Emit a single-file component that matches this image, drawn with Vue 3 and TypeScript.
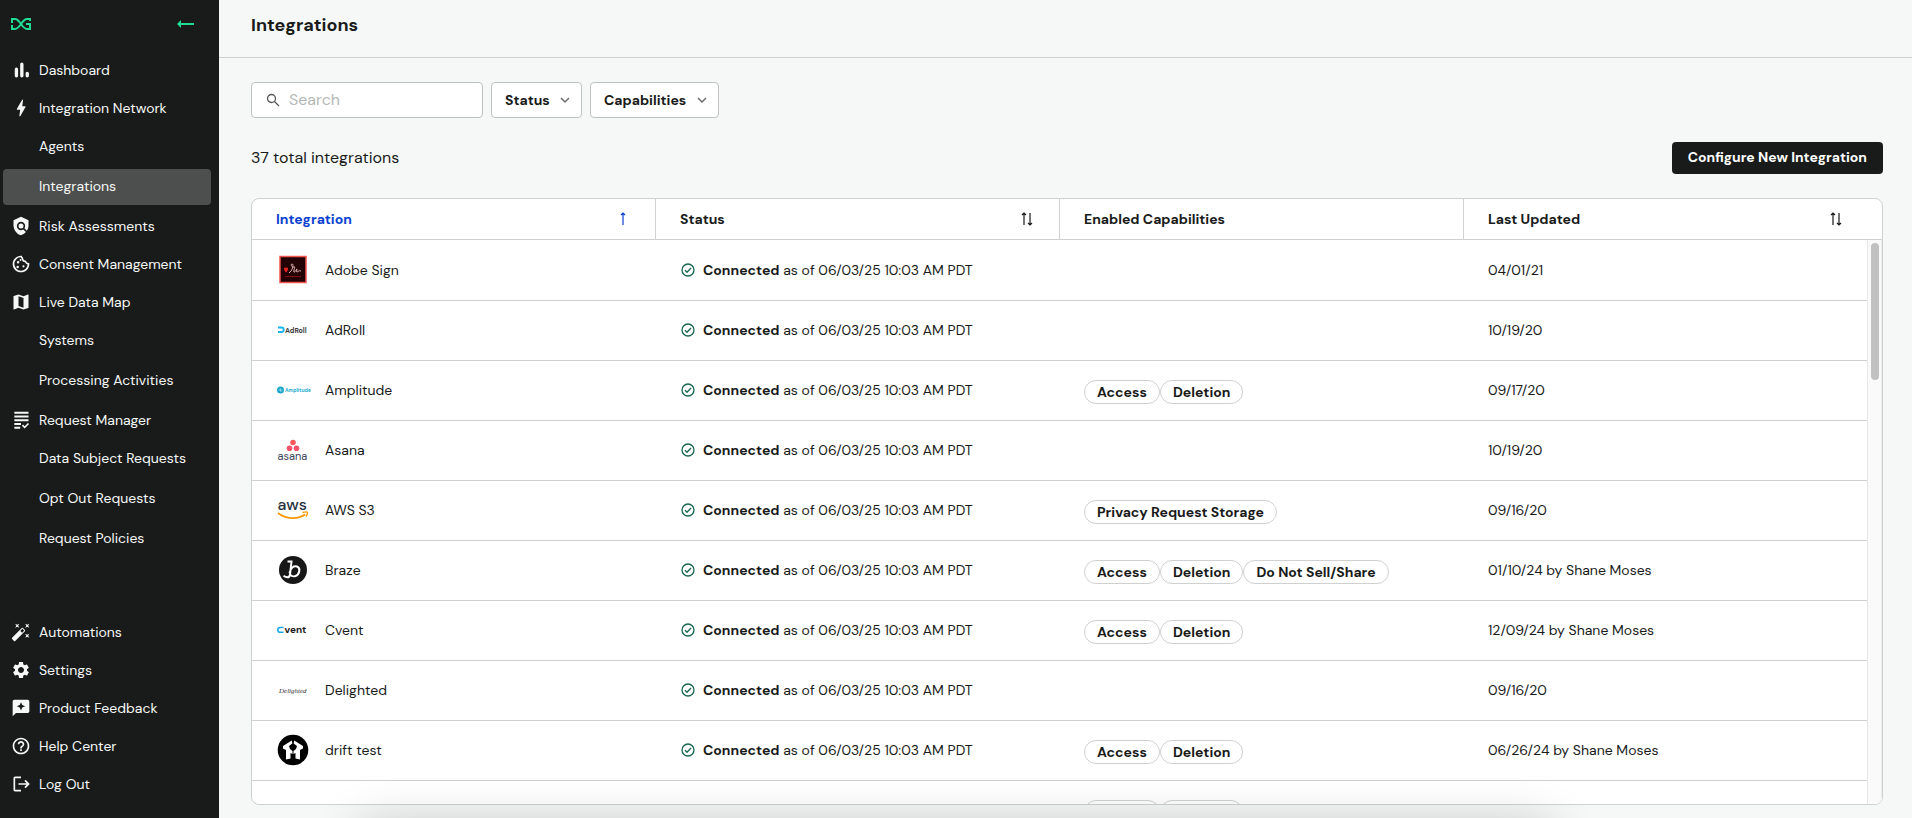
<script setup lang="ts">
import { ref } from 'vue'

interface NavChild { label: string; active?: boolean }
interface NavItem { label: string; icon: string; children?: NavChild[] }
interface Row { name: string; logo: string; caps: string[]; updated: string }

const icons: Record<string, string> = {
  chart: 'M6.500 9a2 2 0 0 1 2 2v8a2 2 0 0 1-4 0v-8a2 2 0 0 1 2-2zM13 3a2 2 0 0 1 2 2v14a2 2 0 0 1-4 0V5a2 2 0 0 1 2-2zM19.500 14a2 2 0 0 1 2 2v3a2 2 0 0 1-4 0v-3a2 2 0 0 1 2-2z',
  bolt: 'M11 22h-1l1-8H7.500c-.88 0-.5-.75-.31-1.100C8.480 10.500 11 6 13.500 2h1l-1 8h3.510c.5 0 .62.300.4.660C12.970 18.500 11 22 11 22z',
  shield: 'M21 5l-9-4-9 4v6c0 5.550 3.840 10.740 9 12 2.300-.56 4.330-1.900 5.880-3.710l-3.120-3.120c-1.940 1.290-4.580 1.070-6.290-.64-1.950-1.950-1.950-5.120 0-7.070 1.950-1.950 5.120-1.950 7.070 0 1.710 1.710 1.920 4.350.64 6.290l2.900 2.900C20.290 15.690 21 13.380 21 11V5zM12 9a3 3 0 1 0 0 6 3 3 0 0 0 0-6z',
  cookie: 'M12 2C6.500 2 2 6.500 2 12s4.500 10 10 10 10-4.500 10-10c0-.4 0-.8-.1-1.200-1.900.3-3.500-.9-3.700-2.700-2.200.2-4-1.500-3.700-3.800-1-.3-1.400-1.200-1.300-2.200C12.800 2 12.400 2 12 2zm-.5 2c.3.700.8 1.300 1.400 1.700.1 2.200 1.700 4 4 4.300.6 1.300 1.700 2.300 3.100 2.700A8 8 0 1 1 11.500 4zM8.500 8.500a1.500 1.500 0 1 0 0 3 1.500 1.500 0 0 0 0-3zM8 14a1.500 1.500 0 1 0 0 3 1.500 1.500 0 0 0 0-3zM15 13.500a1.300 1.300 0 1 0 0 2.600 1.300 1.300 0 0 0 0-2.600zM11.500 6a1.200 1.200 0 1 0 0 2.400 1.200 1.200 0 0 0 0-2.400z',
  map: 'M20.500 3l-.16.03L15 5.100 9 3 3.360 4.900c-.21.07-.36.25-.36.48V20.500c0 .28.22.5.5.5l.16-.03L9 18.900l6 2.100 5.640-1.900c.21-.07.36-.25.36-.48V3.500c0-.28-.22-.5-.5-.5zM15 19l-6-2.110V5l6 2.110V19z',
  list: 'M4 2h17v2.400H4zM4 6.500h17v2.400H4zM4 11h17v2.400H4zM4 15.500h8v2.400H4zM4 20h7v2.400H4zM16.400 22.200l-3.400-3.400 1.400-1.400 2 2 3.900-3.900 1.400 1.400z',
  wand: 'M7.500 5.600L10 7 8.600 4.500 10 2 7.500 3.400 5 2l1.400 2.500L5 7zm12 9.800L17 14l1.400 2.500L17 19l2.500-1.400L22 19l-1.400-2.500L22 14zM22 2l-2.500 1.400L17 2l1.400 2.500L17 7l2.500-1.400L22 7l-1.400-2.500zm-7.630 5.290c-.39-.39-1.020-.39-1.410 0L1.290 18.960c-.39.39-.39 1.020 0 1.410l2.340 2.340c.39.39 1.020.39 1.410 0L16.700 11.050c.39-.39.39-1.020 0-1.410l-2.330-2.350zm-1.030 5.490l-2.120-2.120 2.440-2.440 2.120 2.120-2.440 2.440z',
  gear: 'M19.140 12.940c.04-.3.06-.61.06-.94 0-.32-.02-.64-.07-.94l2.030-1.580c.18-.14.23-.41.12-.61l-1.920-3.320c-.12-.22-.37-.29-.59-.22l-2.390.96c-.5-.38-1.030-.7-1.620-.94l-.36-2.540c-.04-.24-.24-.41-.48-.41h-3.840c-.24 0-.43.17-.47.41l-.36 2.540c-.59.24-1.130.57-1.620.94l-2.390-.96c-.22-.08-.47 0-.59.22L2.740 8.870c-.12.21-.08.47.12.61l2.030 1.580c-.05.3-.09.63-.09.94s.02.64.07.94l-2.030 1.580c-.18.14-.23.41-.12.61l1.920 3.320c.12.22.37.29.59.22l2.390-.96c.5.38 1.030.7 1.620.94l.36 2.540c.05.24.24.41.48.41h3.840c.24 0 .44-.17.47-.41l.36-2.540c.59-.24 1.130-.56 1.620-.94l2.390.96c.22.08.47 0 .59-.22l1.920-3.320c.12-.22.07-.47-.12-.61l-2.010-1.580zM12 15.600c-1.980 0-3.600-1.620-3.600-3.600s1.620-3.600 3.600-3.600 3.600 1.620 3.600 3.600-1.620 3.600-3.600 3.600z',
  feedback: 'M20 2H4c-1.100 0-2 .9-2 2v18l4-4h14c1.100 0 2-.9 2-2V4c0-1.100-.9-2-2-2zm-6.500 9.500L12 15l-1.500-3.500L7 10l3.500-1.500L12 5l1.500 3.500L17 10z',
  help: 'M11 18h2v-2h-2v2zm1-16C6.480 2 2 6.480 2 12s4.480 10 10 10 10-4.480 10-10S17.520 2 12 2zm0 18c-4.410 0-8-3.590-8-8s3.590-8 8-8 8 3.590 8 8-3.590 8-8 8zm0-14c-2.210 0-4 1.790-4 4h2c0-1.100.9-2 2-2s2 .9 2 2c0 2-3 1.750-3 5h2c0-2.250 3-2.500 3-5 0-2.210-1.790-4-4-4z',
  logout: 'M17.500 7l-1.410 1.410L18.670 11H9v2h9.670l-2.580 2.580L17.500 17l5-5zM5 5h7V3H5c-1.100 0-2 .9-2 2v14c0 1.100.9 2 2 2h7v-2H5V5z',
}

const primaryNav: NavItem[] = [
  { label: 'Dashboard', icon: 'chart' },
  {
    label: 'Integration Network',
    icon: 'bolt',
    children: [{ label: 'Agents' }, { label: 'Integrations', active: true }],
  },
  { label: 'Risk Assessments', icon: 'shield' },
  { label: 'Consent Management', icon: 'cookie' },
  {
    label: 'Live Data Map',
    icon: 'map',
    children: [{ label: 'Systems' }, { label: 'Processing Activities' }],
  },
  {
    label: 'Request Manager',
    icon: 'list',
    children: [
      { label: 'Data Subject Requests' },
      { label: 'Opt Out Requests' },
      { label: 'Request Policies' },
    ],
  },
]

const secondaryNav: NavItem[] = [
  { label: 'Automations', icon: 'wand' },
  { label: 'Settings', icon: 'gear' },
  { label: 'Product Feedback', icon: 'feedback' },
  { label: 'Help Center', icon: 'help' },
  { label: 'Log Out', icon: 'logout' },
]

const checkedAt = '06/03/25 10:03 AM PDT'
const rows: Row[] = [
  { name: 'Adobe Sign', logo: 'adobe', caps: [], updated: '04/01/21' },
  { name: 'AdRoll', logo: 'adroll', caps: [], updated: '10/19/20' },
  { name: 'Amplitude', logo: 'amplitude', caps: ['Access', 'Deletion'], updated: '09/17/20' },
  { name: 'Asana', logo: 'asana', caps: [], updated: '10/19/20' },
  { name: 'AWS S3', logo: 'aws', caps: ['Privacy Request Storage'], updated: '09/16/20' },
  { name: 'Braze', logo: 'braze', caps: ['Access', 'Deletion', 'Do Not Sell/Share'], updated: '01/10/24 by Shane Moses' },
  { name: 'Cvent', logo: 'cvent', caps: ['Access', 'Deletion'], updated: '12/09/24 by Shane Moses' },
  { name: 'Delighted', logo: 'delighted', caps: [], updated: '09/16/20' },
  { name: 'drift test', logo: 'drift', caps: ['Access', 'Deletion'], updated: '06/26/24 by Shane Moses' },
]

const query = ref('')
</script>

<template>
  <div class="app">
    <aside class="sidebar">
      <div class="brand">
        <svg class="brand-mark" viewBox="0 0 20 12" aria-hidden="true">
          <path d="M1 5V1h3c5 0 7 10 12 10h3V6h-4M1 7v4h3c5 0 7-10 12-10h3v2" />
        </svg>
        <button class="collapse" type="button" aria-label="Collapse menu">
          <svg viewBox="0 0 18 8" aria-hidden="true"><path d="M0 4l4-4v3h13v2H4v3z" /></svg>
        </button>
      </div>
      <nav class="nav" aria-label="Main">
        <ul class="nav-list">
          <li v-for="item in primaryNav" :key="item.label">
            <a class="nav-item" href="#">
              <svg class="nav-icon" viewBox="0 0 24 24" aria-hidden="true"><path :d="icons[item.icon]" /></svg>
              {{ item.label }}
            </a>
            <ul v-if="item.children" class="sub-list">
              <li v-for="child in item.children" :key="child.label">
                <a class="sub-item" :class="{ active: child.active }" href="#">{{ child.label }}</a>
              </li>
            </ul>
          </li>
        </ul>
        <ul class="nav-list">
          <li v-for="item in secondaryNav" :key="item.label">
            <a class="nav-item" href="#">
              <svg class="nav-icon" viewBox="0 0 24 24" aria-hidden="true"><path :d="icons[item.icon]" /></svg>
              {{ item.label }}
            </a>
          </li>
        </ul>
      </nav>
    </aside>

    <main class="main">
      <header class="page-header"><h1>Integrations</h1></header>
      <div class="content">
        <div class="filters">
          <label class="search">
            <svg viewBox="0 0 14 14" aria-hidden="true"><circle cx="5.500" cy="5.500" r="4" /><path d="M8.500 8.500l4.500 4.500" /></svg>
            <input v-model="query" type="text" placeholder="Search" aria-label="Search" />
          </label>
          <span v-for="f in ['Status', 'Capabilities']" :key="f" class="filter">
            <select :aria-label="f"><option>{{ f }}</option></select>
            <svg viewBox="0 0 10 6" aria-hidden="true"><path d="M1 1l4 4 4-4" /></svg>
          </span>
        </div>

        <div class="summary">
          <span class="total">37 total integrations</span>
          <button class="configure" type="button">Configure New Integration</button>
        </div>

        <div class="table-card">
          <table>
            <thead>
              <tr>
                <th class="sorted" scope="col">
                  <button type="button">Integration
                    <svg viewBox="0 0 14 14" aria-hidden="true"><path d="M7 13V2M5 3l2-2 2 2" /></svg>
                  </button>
                </th>
                <th scope="col">
                  <button type="button">Status
                    <svg viewBox="0 0 14 14" aria-hidden="true"><path d="M4 13V2M2 3l2-2 2 2M10 1v11M8 11l2 2 2-2" /></svg>
                  </button>
                </th>
                <th scope="col"><span>Enabled Capabilities</span></th>
                <th scope="col">
                  <button type="button">Last Updated
                    <svg viewBox="0 0 14 14" aria-hidden="true"><path d="M4 13V2M2 3l2-2 2 2M10 1v11M8 11l2 2 2-2" /></svg>
                  </button>
                </th>
              </tr>
            </thead>
            <tbody>
              <tr v-for="row in rows" :key="row.name">
                <td class="name-cell">
                  <svg class="logo" viewBox="0 0 32 32" aria-hidden="true">
                    <g v-if="row.logo === 'adobe'">
                      <rect x="3" y="2.500" width="26" height="26" fill="#230003" stroke="#f0564f" stroke-width="1.500" />
                      <path d="M7 14c1-.8 2-.8 2.500 0 .6-.8 1.500-.5 1.500.5 0 2-1 2.500-1.500 4C8 17.500 7 16 7 14z" fill="#ed2224" />
                      <path d="M12 19c4-3 5-9 3-9s0 4 2 3-1 4 0 5 3-4 3-3-1 3 0 3 2-2 4-1" fill="none" stroke="#e6b9b9" stroke-width="1" />
                      <path d="M8 22.500h16" stroke="#7c1013" stroke-width="1" />
                    </g>
                    <g v-else-if="row.logo === 'adroll'">
                      <path d="M1 13.500h3.500a2 2 0 0 1 0 4.500H1" fill="none" stroke="#18b4f1" stroke-width="1.800" />
                      <text x="8" y="18.500" font-size="7" font-weight="700" fill="#3b3b3d">AdRoll</text>
                    </g>
                    <g v-else-if="row.logo === 'amplitude'">
                      <circle cx="3.500" cy="16" r="3.500" fill="#17a5c8" />
                      <path d="M1.500 16h4M3 14l1 4" stroke="#8fd6e6" stroke-width="1" />
                      <text x="8" y="18" font-size="5" font-weight="700" fill="#22a9cb">Amplitude</text>
                    </g>
                    <g v-else-if="row.logo === 'asana'">
                      <circle cx="16" cy="8.500" r="2.800" fill="#f9585d" />
                      <circle cx="12.500" cy="14.300" r="2.800" fill="#f7506a" />
                      <circle cx="19.500" cy="14.300" r="2.800" fill="#f7506a" />
                      <text x="0.500" y="26" font-size="11" fill="#3e465c">asana</text>
                    </g>
                    <g v-else-if="row.logo === 'aws'">
                      <text x="0.500" y="16" font-size="16" font-weight="500" fill="#252f3e">aws</text>
                      <path d="M1 19c8 6.500 20 6.500 27 1.500" fill="none" stroke="#ff9900" stroke-width="1.800" />
                      <path d="M25.500 18.500c3-.8 5-.8 5 .2s-.5 2.300-1.500 3.800" fill="none" stroke="#ff9900" stroke-width="1.400" />
                    </g>
                    <g v-else-if="row.logo === 'braze'">
                      <circle cx="16" cy="16" r="14" fill="#171717" />
                      <path d="M10.500 7.500h4l-1.500 13c-.6 4-4 3-6.500 1.200M12.500 19c1-5 4-7.500 7.500-6.500 4 1.500 2.500 8-1.500 9.500-3 1-5-.5-5.500-2" fill="none" stroke="#fff" stroke-width="2" />
                    </g>
                    <g v-else-if="row.logo === 'cvent'">
                      <path d="M6.500 13.500H3.200a2.300 2.300 0 0 0 0 4.800h3.300" fill="none" stroke="#1ca7e6" stroke-width="1.500" />
                      <text x="7.500" y="19" font-size="10" font-weight="700" fill="#191a1c">vent</text>
                    </g>
                    <g v-else-if="row.logo === 'delighted'">
                      <text class="script" x="2" y="18.500" font-size="7" fill="#333">Delighted</text>
                    </g>
                    <g v-else>
                      <circle cx="16" cy="16" r="15.300" fill="#000" />
                      <path d="M6 12l8.800-5.500.5 3-3.300 2.500L13 15l2.500 2v3l-2-1v5.500L9 25.500v-9.500l-3-1.500z" fill="#fff" />
                      <path d="M26 12l-8.800-5.500-.5 3 3.300 2.500L19 15l-2.500 2v3l2-1v5.500l4.500 1v-9.500l3-1.500z" fill="#fff" />
                    </g>
                  </svg>
                  <span>{{ row.name }}</span>
                </td>
                <td class="status-cell">
                  <svg viewBox="0 0 16 16" aria-hidden="true"><circle cx="8" cy="8" r="6" /><path d="M5 8.200l2 2 4-4.200" /></svg>
                  <span><strong>Connected</strong> as of {{ checkedAt }}</span>
                </td>
                <td class="caps-cell">
                  <span v-for="cap in row.caps" :key="cap" class="chip">{{ cap }}</span>
                </td>
                <td>{{ row.updated }}</td>
              </tr>
              <tr>
                <td></td>
                <td></td>
                <td class="caps-cell"><span class="chip">Access</span><span class="chip">Deletion</span></td>
                <td></td>
              </tr>
            </tbody>
          </table>
          <div class="scroll-track" aria-hidden="true"><div class="scroll-thumb"></div></div>
        </div>
      </div>
    </main>
    <div class="bottom-shadow" aria-hidden="true"></div>
  </div>
</template>

<style>
body {
  margin: 0;
  background: #f6f8f7;
}
</style>

<style scoped>
.app,
.app * {
  box-sizing: border-box;
}
.app {
  display: flex;
  height: 100vh;
  overflow: hidden;
  font-family: 'DM Sans', Inter, 'Open Sans', sans-serif;
  font-size: 14px;
  line-height: 20px;
  color: #191b1a;
}
button,
input,
select {
  font: inherit;
  color: inherit;
}
ul {
  margin: 0;
  padding: 0;
  list-style: none;
}
.sidebar {
  flex: 0 0 219px;
  display: flex;
  flex-direction: column;
  background: #191b1a;
  color: #f6f8f7;
}
.brand {
  display: flex;
  align-items: center;
  justify-content: space-between;
  height: 51px;
  padding: 0 24px 3px 11px;
}
.brand-mark {
  width: 20px;
  height: 12px;
  fill: none;
  stroke: #1fdb94;
  stroke-width: 2;
}
.collapse {
  display: flex;
  padding: 0;
  border: 0;
  background: none;
}
.collapse svg {
  width: 18px;
  height: 8px;
  fill: #1fdb94;
}
.nav {
  flex: 1;
  display: flex;
  flex-direction: column;
  justify-content: space-between;
  padding-bottom: 15px;
}
.nav-item {
  display: flex;
  align-items: center;
  gap: 8px;
  height: 38px;
  padding-left: 11px;
  color: inherit;
  text-decoration: none;
}
.nav-icon {
  width: 20px;
  height: 20px;
  fill: currentColor;
}
.sub-list {
  display: flex;
  flex-direction: column;
  gap: 4px;
  padding: 2px 8px 2px 3px;
}
.sub-item {
  display: flex;
  align-items: center;
  height: 36px;
  padding: 0 0 2px 36px;
  border-radius: 4px;
  color: inherit;
  text-decoration: none;
}
.sub-item.active {
  background: #4d4f4e;
}
.main {
  flex: 1;
  min-width: 0;
  display: flex;
  flex-direction: column;
}
.page-header {
  height: 58px;
  padding: 12px 32px 0;
  border-bottom: 1px solid #cfd1d0;
}
h1 {
  margin: 0;
  font-size: 18px;
  line-height: 26px;
  font-weight: 700;
}
.content {
  flex: 1;
  min-height: 0;
  display: flex;
  flex-direction: column;
  gap: 24px;
  padding: 24px 29px 13px 32px;
}
.filters {
  display: flex;
  gap: 8px;
}
.search {
  display: flex;
  align-items: center;
  gap: 9px;
  width: 232px;
  height: 36px;
  padding: 0 14px;
  border: 1px solid #c0c2c1;
  border-radius: 4px;
  background: #fff;
}
.search svg {
  flex: none;
  width: 14px;
  height: 14px;
  fill: none;
  stroke: #555756;
  stroke-width: 1.300;
}
.search input {
  flex: 1;
  min-width: 0;
  padding: 0;
  border: 0;
  outline: 0;
  background: none;
  font-size: 16px;
}
.search input::placeholder {
  color: #b5b7b6;
}
.filter {
  position: relative;
  display: flex;
}
.filter select {
  appearance: none;
  height: 36px;
  padding: 0 31px 0 13px;
  border: 1px solid #c0c2c1;
  border-radius: 4px;
  background: #fff;
  font-weight: 700;
}
.filter svg {
  position: absolute;
  right: 12px;
  top: 15px;
  width: 10px;
  height: 6px;
  overflow: visible;
  fill: none;
  stroke: #6b6d6c;
  stroke-width: 1.500;
  pointer-events: none;
}
.summary {
  display: flex;
  align-items: center;
  justify-content: space-between;
}
.total {
  font-size: 16px;
}
.configure {
  height: 32px;
  padding: 0 16px 2px;
  border: 0;
  border-radius: 4px;
  background: #191b1a;
  color: #fff;
  font-weight: 700;
}
.table-card {
  position: relative;
  flex: 1;
  min-height: 0;
  overflow: hidden;
  border: 1px solid #cfd1d0;
  border-radius: 8px;
  background: #fff;
}
table,
thead,
tbody {
  display: block;
}
table {
  height: 100%;
}
tr {
  display: grid;
  grid-template-columns: repeat(4, minmax(0, 1fr));
}
thead {
  padding-right: 14px;
  border-bottom: 1px solid #cfd1d0;
}
th {
  padding: 0;
  text-align: left;
  font-weight: 700;
}
th:not(:last-child) {
  border-right: 1px solid #cfd1d0;
}
th button,
th span {
  display: flex;
  align-items: center;
  justify-content: space-between;
  width: 100%;
  height: 40px;
  padding: 0 25px 0 24px;
  border: 0;
  background: none;
}
th svg {
  width: 14px;
  height: 14px;
  fill: none;
  stroke: currentColor;
  stroke-width: 1.200;
}
.sorted {
  color: #0a41d0;
}
tbody {
  height: calc(100% - 41px);
  margin-right: 14px;
  padding-top: 1px;
  overflow-y: auto;
  scrollbar-width: none;
}
tbody tr {
  height: 60px;
  border-bottom: 1px solid #cfd1d0;
}
td {
  display: flex;
  align-items: center;
  padding: 0 24px 2px;
  white-space: nowrap;
}
td.name-cell {
  gap: 16px;
  padding-left: 25px;
}
.logo {
  flex: none;
  width: 32px;
  height: 32px;
  overflow: visible;
}
.script {
  font-family: 'Liberation Serif', serif;
  font-style: italic;
}
.status-cell {
  gap: 7px;
}
.status-cell svg {
  flex: none;
  width: 16px;
  height: 16px;
  fill: none;
  stroke: #17664c;
  stroke-width: 1.300;
}
strong {
  font-weight: 700;
}
td.caps-cell {
  padding-top: 3px;
  padding-bottom: 0;
}
.chip {
  height: 24px;
  padding: 1px 12px;
  border: 1px solid #cfd1d0;
  border-radius: 12px;
  font-weight: 700;
}
.scroll-track {
  position: absolute;
  top: 41px;
  right: 0;
  bottom: 0;
  width: 15px;
  padding: 3px;
  border-left: 1px solid #e7e7e7;
  border-right: 1px solid #ececec;
  background: #fafafa;
}
.scroll-thumb {
  width: 8px;
  height: 137px;
  border-radius: 4px;
  background: #c1c1c1;
}
.bottom-shadow {
  position: fixed;
  left: 360px;
  right: 360px;
  top: 100%;
  height: 60px;
  box-shadow: 0 6px 48px rgba(0, 0, 0, 0.2);
}
</style>
